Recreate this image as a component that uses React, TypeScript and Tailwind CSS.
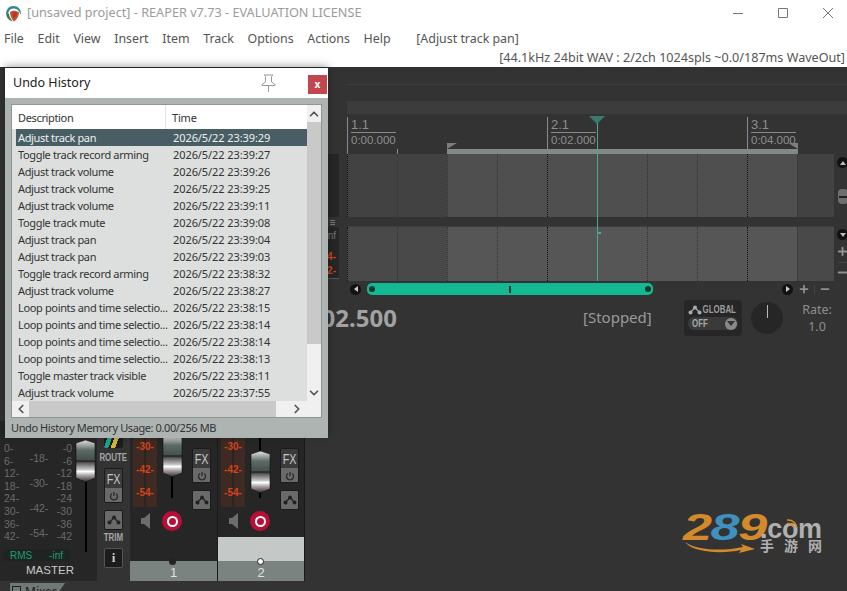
import React from "react";
import { ChevronUp, ChevronDown, ChevronLeft, ChevronRight, Minus, Plus } from "lucide-react";

const UI = "font-['Noto_Sans','Noto_Sans_CJK_SC',sans-serif]";
const rows: [string, string][] = [
  ["Adjust track pan", "2026/5/22 23:39:29"],
  ["Toggle track record arming", "2026/5/22 23:39:27"],
  ["Adjust track volume", "2026/5/22 23:39:26"],
  ["Adjust track volume", "2026/5/22 23:39:25"],
  ["Adjust track volume", "2026/5/22 23:39:11"],
  ["Toggle track mute", "2026/5/22 23:39:08"],
  ["Adjust track pan", "2026/5/22 23:39:04"],
  ["Adjust track pan", "2026/5/22 23:39:03"],
  ["Toggle track record arming", "2026/5/22 23:38:32"],
  ["Adjust track volume", "2026/5/22 23:38:27"],
  ["Loop points and time selectio...", "2026/5/22 23:38:15"],
  ["Loop points and time selectio...", "2026/5/22 23:38:14"],
  ["Loop points and time selectio...", "2026/5/22 23:38:14"],
  ["Loop points and time selectio...", "2026/5/22 23:38:13"],
  ["Toggle master track visible", "2026/5/22 23:38:11"],
  ["Adjust track volume", "2026/5/22 23:37:55"],
];
const menus = ["File", "Edit", "View", "Insert", "Item", "Track", "Options", "Actions", "Help"];

function ReaperLogo() {
  return (
    <svg width="17" height="17" viewBox="0 0 17 17">
      <path d="M1.5 11 C0 6 3 1 8.5 1 C14 1 17 6 15.5 10 C14.5 5.5 11.5 3.5 8.5 3.5 C5 3.5 3 6.5 3.5 9.5 Z" fill="#2b8c92" />
      <path d="M1.5 11 C2.5 14 5 16 8 16.5 C5.5 14 4 11 4 8.5 C3 9 2 10 1.5 11Z" fill="#3a7d4f" />
      <path d="M5 7 C7.5 5 11.5 5.3 14 7.5 C14 11 12 14.5 9 16.5 C6.5 14 5 10.5 5 7Z" fill="#c4502f" />
      <path d="M7.5 7.5 C9 7 10.5 7 12 8 C11.5 10 10.5 12 9.2 13.5 C8 11.5 7.5 9.5 7.5 7.5Z" fill="#b03a2a" />
    </svg>
  );
}

function Lane({ shade, sel, height }: { shade: string; sel: string; height: string }) {
  const cells = [0, 1, 2, 3, 4, 5, 6, 7, 8, 9];
  return (
    <div className={`flex overflow-hidden ${height}`}>
      {cells.map((i) => {
        const major = i % 4 === 0;
        const inSel = i >= 2 && i < 9;
        return (
          <div
            key={i}
            className={`w-[50px] shrink-0 border-l border-dotted ${major ? "border-[#111]" : "border-[#333]"}`}
            style={{ backgroundColor: inSel ? sel : shade }}
          />
        );
      })}
    </div>
  );
}

function RulerMark({ bar, time, x }: { bar: string; time: string; x: string }) {
  return (
    <div className={`absolute top-[3px] h-[37px] border-l border-[#8a8a8a] pl-[3px] font-['Liberation_Sans',sans-serif] leading-[13px] text-[#8e8e8e] ${x}`}>
      <div className="border-b border-[#8a8a8a] pb-[1px] pr-[1px] pt-[1px] text-[13px]">{bar}</div>
      <div className="pt-[1px] text-[11.5px]">{time}</div>
    </div>
  );
}

function Circle({ children }: { children: React.ReactNode }) {
  return <div className="flex h-[11px] w-[11px] items-center justify-center rounded-full bg-[#111]">{children}</div>;
}

function Narrow({ children, w, className }: { children: React.ReactNode; w: string; className: string }) {
  return (
    <div className={`flex justify-center ${w}`}>
      <span className={`inline-block origin-center scale-x-[0.72] whitespace-nowrap font-['Liberation_Sans',sans-serif] ${className}`}>{children}</span>
    </div>
  );
}

function FaderCap() {
  const id = React.useId();
  return (
    <svg width="21" height="42" viewBox="0 0 21 42" className="block shrink-0">
      <defs>
        <linearGradient id={id + "a"} x1="0" x2="0" y1="0" y2="1">
          <stop offset="0" stopColor="#e8e8e8" />
          <stop offset="0.1" stopColor="#aeb2b0" />
          <stop offset="0.24" stopColor="#5d6b67" />
          <stop offset="0.47" stopColor="#46504e" />
          <stop offset="0.5" stopColor="#1c1c1c" />
          <stop offset="0.54" stopColor="#555" />
          <stop offset="0.7" stopColor="#c4c4c4" />
          <stop offset="0.75" stopColor="#ffffff" />
          <stop offset="0.84" stopColor="#a9a5a8" />
          <stop offset="0.95" stopColor="#5a5055" />
          <stop offset="1" stopColor="#2a2528" />
        </linearGradient>
      </defs>
      <path d="M1 3 L10.5 0 L20 3 L20 38 L10.5 42 L1 38 Z" fill={`url(#${id}a)`} stroke="#111" strokeWidth="0.6" />
    </svg>
  );
}

function SmallTrim({ color = "#222" }: { color?: string }) {
  return (
    <svg width="14" height="10" viewBox="0 0 14 10" className="shrink-0">
      <path d="M2 8 L7 2.5 L12 8" fill="none" stroke={color} strokeWidth="1.2" />
      <circle cx="2.5" cy="7.5" r="2" fill={color} />
      <circle cx="7" cy="2.5" r="2" fill={color} />
      <circle cx="11.5" cy="7.5" r="2" fill={color} />
    </svg>
  );
}

function FxButton() {
  return (
    <div className="h-[35px] w-[19px] overflow-hidden rounded-[2px] border border-[#1a1a1a]">
      <div className="flex h-[19px] items-center justify-center bg-[#3b3b3b] text-[#c4c4c4]">
        <Narrow w="w-full" className="text-[15px] leading-[18px] scale-x-[0.8]">FX</Narrow>
      </div>
      <div className="flex h-[15px] items-center justify-center bg-[#6a6a6a]">
        <svg width="10" height="10" viewBox="0 0 10 10" fill="none" stroke="#2a2a2a" strokeWidth="1.3">
          <path d="M3 2.5 A3.5 3.5 0 1 0 7 2.5 M5 1 V5" />
        </svg>
      </div>
    </div>
  );
}

function TrimButton() {
  return (
    <div className="flex h-[20px] w-[19px] items-center justify-center rounded-[2px] border border-[#1a1a1a] bg-[#6a6a6a]">
      <SmallTrim />
    </div>
  );
}

function TrackStrip({ num, faderTop, selected, w }: { num: string; faderTop: string; selected?: boolean; w: string }) {
  return (
    <div className={`relative flex h-full shrink-0 flex-col border-r border-[#1a1a1a] bg-[#262626] ${w}`}>
      <div className="flex h-[89px] shrink-0">
        <div className="ml-[3px] flex h-[86px] w-[24px] flex-col items-center bg-[linear-gradient(90deg,#3e2a23_0_11px,#2c2422_11px_13px,#3e2a23_13px)] pt-[14px] font-['Liberation_Sans',sans-serif] text-[10px] font-bold leading-[23px] text-[#d4441a]">
          <div>-30-</div>
          <div>-42-</div>
          <div>-54-</div>
        </div>
        <div className="flex h-[77px] w-[30px] flex-col items-center">
          <div className={`w-[2px] shrink-0 bg-black ${faderTop}`} />
          <FaderCap />
          <div className="w-[2px] flex-1 bg-black" />
        </div>
        <div className="ml-[5px] flex flex-col">
          <div className="mt-[15px] h-[5px] w-[19px] rounded-b-[2px] bg-[linear-gradient(100deg,#1d1d1d_30%,#3a5a50_30%_55%,#1d1d1d_55%)]" />
          <div className="mt-[11px]"><FxButton /></div>
          <div className="mt-[7px]"><TrimButton /></div>
        </div>
      </div>
      <div className="flex h-[27px] shrink-0 items-start pl-[11px] pt-[1px]">
        <svg width="9" height="16" viewBox="0 0 9 16" className="mt-[2px]">
          <path d="M0 5 H3 L9 0 V16 L3 11 H0 Z" fill="#6d6d6d" />
        </svg>
        <div className="ml-[12px] flex h-[20px] w-[20px] items-center justify-center rounded-full bg-[#b80f37]">
          <div className="h-[11px] w-[11px] rounded-full border-[2.5px] border-white" />
        </div>
      </div>
      <div className={`flex-1 ${selected ? "bg-[#c4c8c6]" : "bg-[#262626]"}`} />
      <div className="flex h-[20px] shrink-0 items-center justify-center bg-[#7b8381] pt-[3px] font-['Liberation_Sans',sans-serif] text-[13px] text-[#dfe2e1]">
        {num}
      </div>
      <div className={`absolute bottom-[16px] left-[39px] h-[7px] w-[7px] rounded-full ${selected ? "border border-[#222] bg-white" : "bg-[#222]"}`} />
    </div>
  );
}

function MasterScale() {
  const l = ["0-", "6-", "12-", "18-", "24-", "30-", "36-", "42-"];
  const r = ["-0", "-6", "-12", "-18", "-24", "-30", "-36", "-42"];
  const m = ["-18-", "-30-", "-42-", "-54-"];
  return (
    <div className="flex h-[107px] w-[69px] font-['Liberation_Sans',sans-serif] text-[10.5px] text-[#6b6b6b]">
      <div className="w-[24px] pl-[1px] leading-[12.6px]">
        {l.map((t) => <div key={t}>{t}</div>)}
      </div>
      <div className="w-[24px] pt-[4px] text-center leading-[25px]">
        {m.map((t) => <div key={t}>{t}</div>)}
      </div>
      <div className="flex-1 text-right leading-[12.6px]">
        {r.map((t) => <div key={t}>{t}</div>)}
      </div>
    </div>
  );
}

export default function App() {
  return (
    <div className={`relative flex h-[591px] w-[847px] flex-col overflow-hidden bg-[#333333] ${UI}`}>
      {/* window chrome */}
      <div className="flex h-[26px] shrink-0 items-center bg-white pl-[5px] text-[12.7px] text-[#9b9b9b]">
        <ReaperLogo />
        <span className="ml-[5px]">[unsaved project] - REAPER v7.73 - EVALUATION LICENSE</span>
        <div className="ml-auto flex items-center gap-[33px] pr-[13px]">
          <svg width="12" height="12" viewBox="0 0 12 12" stroke="#777" strokeWidth="1"><path d="M1 6.5 H11" /></svg>
          <svg width="12" height="12" viewBox="0 0 12 12" stroke="#777" strokeWidth="1" fill="none"><path d="M1.5 1.5 H10.5 V10.5 H1.5 Z" /></svg>
          <svg width="12" height="12" viewBox="0 0 12 12" stroke="#777" strokeWidth="1"><path d="M1 1 L11 11 M11 1 L1 11" /></svg>
        </div>
      </div>
      <div className="flex h-[23px] shrink-0 items-center gap-[13.7px] bg-white pl-[4px] pt-[3px] text-[12.4px] text-[#555]">
        {menus.map((m) => <span key={m}>{m}</span>)}
        <span className="ml-[12px]">[Adjust track pan]</span>
      </div>
      <div className="flex h-[18px] shrink-0 items-center justify-end bg-white pr-[2px] text-[12.6px] text-[#555]">
        [44.1kHz 24bit WAV : 2/2ch 1024spls ~0.0/187ms WaveOut]
      </div>

      {/* arrange */}
      <div className="flex h-[228px] shrink-0">
        <div className="flex w-[347px] shrink-0 flex-col items-end pr-[8px] pt-[87px]">
          <div className="h-[63px] w-[34px] bg-[#262626]" />
          <div className="flex h-[10px] w-[34px] flex-col items-end justify-center gap-[1px] pr-[4px]">
            <div className="h-px w-[5px] bg-[#777]" />
            <div className="h-px w-[5px] bg-[#777]" />
            <div className="h-px w-[5px] bg-[#777]" />
          </div>
          <div className="flex h-[52px] w-[34px] flex-col items-end border-b border-[#555] bg-[#262626] pr-[3px] pt-[2px] font-['Liberation_Sans',sans-serif] text-[10px] font-bold leading-[14px]">
            <div className="font-normal text-[#777]">nf</div>
            <div className="mt-[7px] text-[#d4441a]">4-</div>
            <div className="text-[#d4441a]">2-</div>
          </div>
        </div>
        <div className="flex w-[500px] flex-col">
          <div className="h-[18px] shrink-0 border-b border-[#3c3c3c]" />
          <div className="h-[16px] shrink-0" />
          <div className="h-[13px] shrink-0 bg-[#3c3c3c]" />
          <div className="relative h-[40px] shrink-0">
            <RulerMark bar="1.1" time="0:00.000" x="left-0" />
            <RulerMark bar="2.1" time="0:02.000" x="left-[200px]" />
            <RulerMark bar="3.1" time="0:04.000" x="left-[400px]" />
            <div className="absolute left-[50px] top-[35px] h-[5px] w-px bg-[#8a8a8a]" />
            <div className="absolute bottom-0 left-[100px] h-[5px] w-[351px] bg-[#838987]" />
            <div className="absolute bottom-[5px] left-[100px] h-0 w-0 border-r-[10px] border-t-[6px] border-r-transparent border-t-[#7a7f7d]" />
            <div className="absolute bottom-[5px] left-[441px] h-0 w-0 border-l-[10px] border-t-[6px] border-l-transparent border-t-[#7a7f7d]" />
            <div className="absolute left-[242px] top-[2px] h-0 w-0 border-x-[8px] border-t-[8px] border-x-transparent border-t-[#3b7b6f]" />
            <div className="absolute bottom-0 left-[250px] top-[9px] w-px bg-[#4fa595]" />
          </div>
          <div className="flex">
            <div className="relative w-[487px] shrink-0">
              <Lane shade="#424242" sel="#4f4f4f" height="h-[63px]" />
              <div className="h-[10px] border-b border-[#3e3e3e] bg-[#333]" />
              <Lane shade="#494949" sel="#565656" height="h-[54px]" />
              <div className="absolute bottom-0 left-[250px] top-0 w-px bg-[#4fa595]" />
              <div className="absolute left-[251px] top-[78px] h-[2px] w-[3px] bg-[#4fa595]" />
            </div>
            <div className="flex flex-1 flex-col items-center pl-[2px] text-[#111]">
              <div className="mt-[3px]"><Circle><div className="h-0 w-0 border-x-[3px] border-b-[4px] border-x-transparent border-b-[#bbb]" /></Circle></div>
              <div className="mt-[21px] flex h-[15px] w-[10px] items-center justify-center rounded-[4px] bg-[#6e6e6e]"><div className="h-[2px] w-[8px] bg-[#222]" /></div>
              <div className="mt-[25px]"><Circle><div className="h-0 w-0 border-x-[3px] border-t-[4px] border-x-transparent border-t-[#bbb]" /></Circle></div>
              <Plus size={13} strokeWidth={3.5} className="mt-[5px] text-[#909090]" />
              <div className="mt-[4px] h-[1px] w-[10px] bg-[#444]" />
              <Minus size={13} strokeWidth={3.5} className="mt-[3px] text-[#909090]" />
            </div>
          </div>
          <div className="flex h-[14px] shrink-0 items-center pl-[3px] pt-[2px]">
            <Circle><div className="h-0 w-0 border-y-[3px] border-r-[4px] border-y-transparent border-r-[#ccc]" /></Circle>
            <div className="ml-[6px] flex h-[12px] w-[286px] items-center justify-between rounded-[5px] bg-[#14b993] px-[2px]">
              <div className="h-[6px] w-[6px] rounded-full bg-[#0c3a30]" />
              <div className="h-[7px] w-[2px] bg-[#0c3a30]" />
              <div className="h-[6px] w-[6px] rounded-full bg-[#0c3a30]" />
            </div>
            <div className="ml-[129px]"><Circle><div className="h-0 w-0 border-y-[3px] border-l-[4px] border-y-transparent border-l-[#ccc]" /></Circle></div>
            <Plus size={12} strokeWidth={3.5} className="ml-[5px] text-[#909090]" />
            <div className="ml-[4px] h-[9px] w-px bg-[#444]" />
            <Minus size={12} strokeWidth={3.5} className="ml-[4px] text-[#909090]" />
          </div>
        </div>
      </div>

      {/* transport */}
      <div className="flex h-[45px] shrink-0 items-start">
        <div className="mt-[7px] w-[397px] text-right text-[24px] font-bold leading-[32px] text-[#a2a2a2]">02.500</div>
        <div className="ml-[186px] mt-[11px] w-[71px] text-[15px] leading-[22px] text-[#9a9a9a]">[Stopped]</div>
        <div className="ml-[30px] mt-[5px] flex h-[36px] w-[58px] flex-col rounded-[4px] bg-[#262626] px-[4px] pt-[2px]">
          <div className="flex items-center text-[#9c9c9c]">
            <SmallTrim color="#aaa" />
            <Narrow w="w-[34px]" className="text-[11px] font-bold leading-[15px]">GLOBAL</Narrow>
          </div>
          <div className="flex h-[13px] items-center justify-between rounded-[6px] bg-[#3a3a3a] pr-[1px] text-[#a8a8a8]">
            <Narrow w="w-[24px]" className="text-[11px] font-bold leading-[13px]">OFF</Narrow>
            <div className="flex h-[12px] w-[12px] items-center justify-center rounded-full bg-[#8a8a8a]"><div className="h-0 w-0 border-x-[4px] border-t-[5px] border-x-transparent border-t-[#333]" /></div>
          </div>
        </div>
        <div className="ml-[9px] mt-[7px] flex h-[32px] w-[32px] justify-center rounded-full bg-[#262626] pt-[3px]">
          <div className="h-[13px] w-px bg-[#bbb]" />
        </div>
        <div className="ml-[14px] mt-[6px] w-[40px] text-center text-[12.5px] leading-[17px] text-[#8e8e8e]">
          <div>Rate:</div>
          <div>1.0</div>
        </div>
      </div>

      {/* mixer */}
      <div className="mt-[81px] flex h-[160px] w-[305px] shrink-0 self-start">
        <div className="flex w-[97px] shrink-0 flex-col bg-[#262626] pl-[3px]">
          <div className="relative flex flex-1 pt-[21px]">
            <MasterScale />
            <div className="absolute left-[72px] top-0 flex h-[131px] w-[21px] flex-col items-center">
              <div className="h-[19px] shrink-0" />
              <FaderCap />
              <div className="w-[2px] flex-1 bg-black" />
            </div>
          </div>
          <div className="flex h-[12px] w-[67px] items-center justify-between bg-[#1f2423] px-[7px] pt-[1px] font-['Liberation_Sans',sans-serif] text-[10px] text-[#1c9c6e]">
            <span>RMS</span><span>-inf</span>
          </div>
          <div className="flex h-[20px] items-center justify-center font-['Liberation_Sans',sans-serif] text-[11.5px] text-[#c9c9c9]">MASTER</div>
        </div>
        <div className="flex w-[33px] shrink-0 flex-col items-center bg-[#333] pt-[17px] text-[#a5a5a5]">
          <div className="h-[10px] w-[19px] rounded-b-[2px] bg-[linear-gradient(110deg,#1d1d1d_15%,#19a58a_15%_35%,#1d1d1d_35%_45%,#d4b43a_45%_65%,#1d1d1d_65%)]" />
          <Narrow w="mt-[3px] h-[12px] w-full" className="text-[11px] font-bold leading-[12px]">ROUTE</Narrow>
          <div className="mt-[5px]"><FxButton /></div>
          <div className="mt-[7px]"><TrimButton /></div>
          <Narrow w="mt-[1px] h-[12px] w-full" className="text-[11px] font-bold leading-[12px]">TRIM</Narrow>
          <div className="mt-[5px] flex h-[20px] w-[19px] items-center justify-center rounded-[2px] border border-[#555] bg-[#1c1c1c] font-['Liberation_Serif',serif] text-[13px] font-bold text-[#ccc]">i</div>
        </div>
        <TrackStrip num="1" faderTop="h-[14px]" w="w-[88px]" />
        <TrackStrip num="2" faderTop="h-[30px]" selected w="w-[87px]" />
      </div>
      <div className="flex h-[10px] shrink-0 items-end bg-[#333]">
        <div className="ml-[10px] flex h-[8px] w-[55px] items-start gap-[4px] overflow-hidden bg-[#6f7a77] pl-[2px] pt-[2px] text-[12px] leading-[14px] text-[#1c1c1c] [clip-path:polygon(0_0,100%_0,90%_100%,0_100%)]">
          <div className="mt-[1px] h-[9px] w-[9px] shrink-0 border border-[#222]" />
          Mixer
        </div>
      </div>

      {/* Undo History floating window */}
      <div className="absolute left-[5px] top-[68px] flex h-[370px] w-[323px] flex-col bg-[#aeb4b2] shadow-[0_-2px_8px_rgba(0,0,0,0.35)]">
        <div className="flex h-[30px] shrink-0 items-center justify-between bg-white pl-[8px] pr-[1px] text-[12.5px] text-[#222]">
          Undo History
          <div className="flex items-start gap-[32px] pt-[2px]">
            <svg width="15" height="19" viewBox="0 0 15 19" fill="none" stroke="#999" strokeWidth="1" className="mt-[-1px]">
              <path d="M3 1 H12 L10.5 2.5 V8 L14 10.5 V11.5 H1 V10.5 L4.5 8 V2.5 Z M7.5 11.5 V18" />
            </svg>
            <div className="flex h-[19px] w-[19px] items-center justify-center bg-[#c0484c] text-[10px] font-bold leading-none text-white">x</div>
          </div>
        </div>
        <div className="mx-[6px] mt-[6px] flex h-[314px] flex-col border border-[#8f9593] bg-[#eff0ef] text-[11px] text-[#333]">
          <div className="flex min-h-0 flex-1">
            <div className="flex w-[295px] shrink-0 flex-col">
              <div className="flex h-[24px] shrink-0 items-center bg-white pl-[6px] leading-none">
                <span className="flex h-full w-[148px] items-center border-r border-[#e3e3e3] tracking-[-0.35px]">Description</span>
                <span className="pl-[6px] tracking-[-0.2px]">Time</span>
              </div>
              <div className="flex-1 overflow-hidden bg-[#dcdfdd] pl-[4px]">
                {rows.map(([d, t], i) => (
                  <div
                    key={i}
                    className={`flex h-[17px] items-center pl-[2px] leading-none ${i === 0 ? "bg-[#485e64] text-[#eef1f1]" : ""}`}
                  >
                    <span className="w-[155px] whitespace-nowrap tracking-[-0.35px]">{d}</span>
                    <span className="tracking-[-0.08px]">{t}</span>
                  </div>
                ))}
              </div>
            </div>
            <div className="flex flex-1 flex-col items-center pt-[1px]">
              <ChevronUp size={14} strokeWidth={3} className="h-[16px] text-[#555]" />
              <div className="h-[222px] w-full bg-[#c9c9c9]" />
              <div className="flex-1" />
              <ChevronDown size={14} strokeWidth={3} className="h-[16px] text-[#555]" />
            </div>
          </div>
          <div className="flex h-[16px] shrink-0 items-center">
            <ChevronLeft size={14} strokeWidth={3} className="ml-[2px] text-[#555]" />
            <div className="ml-[1px] h-full w-[247px] bg-[#c9c9c9]" />
            <ChevronRight size={14} strokeWidth={3} className="ml-[14px] text-[#555]" />
          </div>
        </div>
        <div className="flex-1 pl-[6px] pt-[1px] text-[11px] leading-[18px] tracking-[-0.4px] text-[#333]">Undo History Memory Usage: 0.00/256 MB</div>
      </div>

      {/* watermark */}
      <div className="absolute left-[684px] top-[512px] h-[44px] w-[140px]">
        <span className="absolute left-[-1px] top-[-3px] origin-left scale-x-[1.45] font-['Liberation_Sans',sans-serif] text-[36px] font-bold italic leading-[38px] tracking-[-1px] text-[#d38a2a]">
          2<span className="text-[#3f8fbf]">8</span>9
        </span>
        <span className="absolute left-[76px] top-[7px] font-['Liberation_Sans',sans-serif] text-[27px] font-bold leading-[20px] tracking-[-0.3px] text-[#b0b0b0]">.com</span>
        <svg width="16" height="16" viewBox="0 0 16 16" fill="none" stroke="#d38a2a" strokeWidth="1.5" className="absolute left-[100px] top-[3px]">
          <path d="M3 5 A9 9 0 0 1 13 13 M3 8.5 A6 6 0 0 1 10 13" />
        </svg>
        <span className="absolute left-[76px] top-[27px] whitespace-nowrap font-['Noto_Sans_CJK_SC',sans-serif] text-[14px] font-bold leading-[12px] tracking-[10px] text-[#b0b0b0]">手游网</span>
        <svg width="72" height="12" viewBox="0 0 72 12" className="absolute left-[1px] top-[30px]">
          <path d="M0 0 C12 9 40 9 58 5 L56 2 L70 7 L54 11 L56 8 C38 12 8 11 0 0Z" fill="#d38a2a" />
        </svg>
      </div>
    </div>
  );
}
